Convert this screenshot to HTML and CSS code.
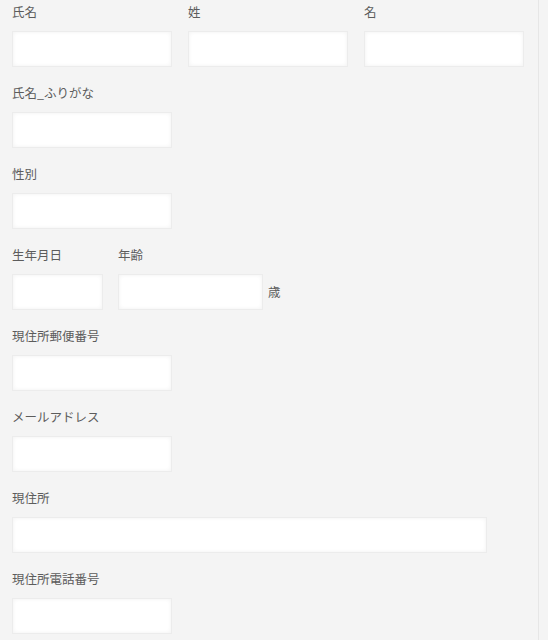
FILE: index.html
```html
<!DOCTYPE html>
<html lang="ja">
<head>
<meta charset="utf-8">
<link rel="stylesheet" href="styles.css">
</head>
<body>
<div class="page">
  <form class="form">
    <div class="row">
      <div class="field">
        <label class="label">氏名</label>
        <input class="input w160" type="text">
      </div>
      <div class="field">
        <label class="label">姓</label>
        <input class="input w160" type="text">
      </div>
      <div class="field">
        <label class="label">名</label>
        <input class="input w160" type="text">
      </div>
    </div>
    <div class="row">
      <div class="field">
        <label class="label">氏名_ふりがな</label>
        <input class="input w160" type="text">
      </div>
    </div>
    <div class="row">
      <div class="field">
        <label class="label">性別</label>
        <input class="input w160" type="text">
      </div>
    </div>
    <div class="row row-tight">
      <div class="field">
        <label class="label">生年月日</label>
        <input class="input w91" type="text">
      </div>
      <div class="field">
        <label class="label">年齢</label>
        <div class="with-suffix">
          <input class="input w144" type="text">
          <span class="suffix">歳</span>
        </div>
      </div>
    </div>
    <div class="row">
      <div class="field">
        <label class="label">現住所郵便番号</label>
        <input class="input w160" type="text">
      </div>
    </div>
    <div class="row">
      <div class="field">
        <label class="label">メールアドレス</label>
        <input class="input w160" type="text">
      </div>
    </div>
    <div class="row">
      <div class="field">
        <label class="label">現住所</label>
        <input class="input w474" type="text">
      </div>
    </div>
    <div class="row">
      <div class="field">
        <label class="label">現住所電話番号</label>
        <input class="input w160" type="text">
      </div>
    </div>
  </form>
</div>
</body>
</html>
```

FILE: styles.css
```css
html, body {
  margin: 0;
  padding: 0;
  background: #f4f4f4;
}
body {
  font-family: "Noto Sans CJK JP", "Noto Sans", sans-serif;
  color: #5c5c5c;
  font-size: 12.5px;
}
.page {
  width: 539px;
  min-height: 640px;
  border-right: 1px solid #e6e6e6;
  box-sizing: border-box;
}
.form {
  display: flex;
  flex-direction: column;
  gap: 16px;
  padding: 2px 0 0 12px;
}
.row {
  display: flex;
  gap: 16px;
}
.row-tight {
  gap: 15px;
}
.field {
  display: flex;
  flex-direction: column;
  gap: 9px;
}
.label {
  display: block;
  line-height: 20px;
  height: 20px;
}
.input {
  display: block;
  box-sizing: border-box;
  height: 36px;
  margin: 0;
  padding: 0 6px;
  background: #fff;
  border: 1px solid #ececec;
  border-radius: 0;
  box-shadow: inset 0 0 4px rgba(0, 0, 0, 0.06);
  outline: none;
  font: inherit;
}
.w160 { width: 160px; }
.w91 { width: 91px; }
.w144 { width: 145px; }
.w474 { width: 475px; }
.with-suffix {
  display: flex;
  align-items: center;
  gap: 5px;
}
.suffix {
  line-height: 20px;
}
```
